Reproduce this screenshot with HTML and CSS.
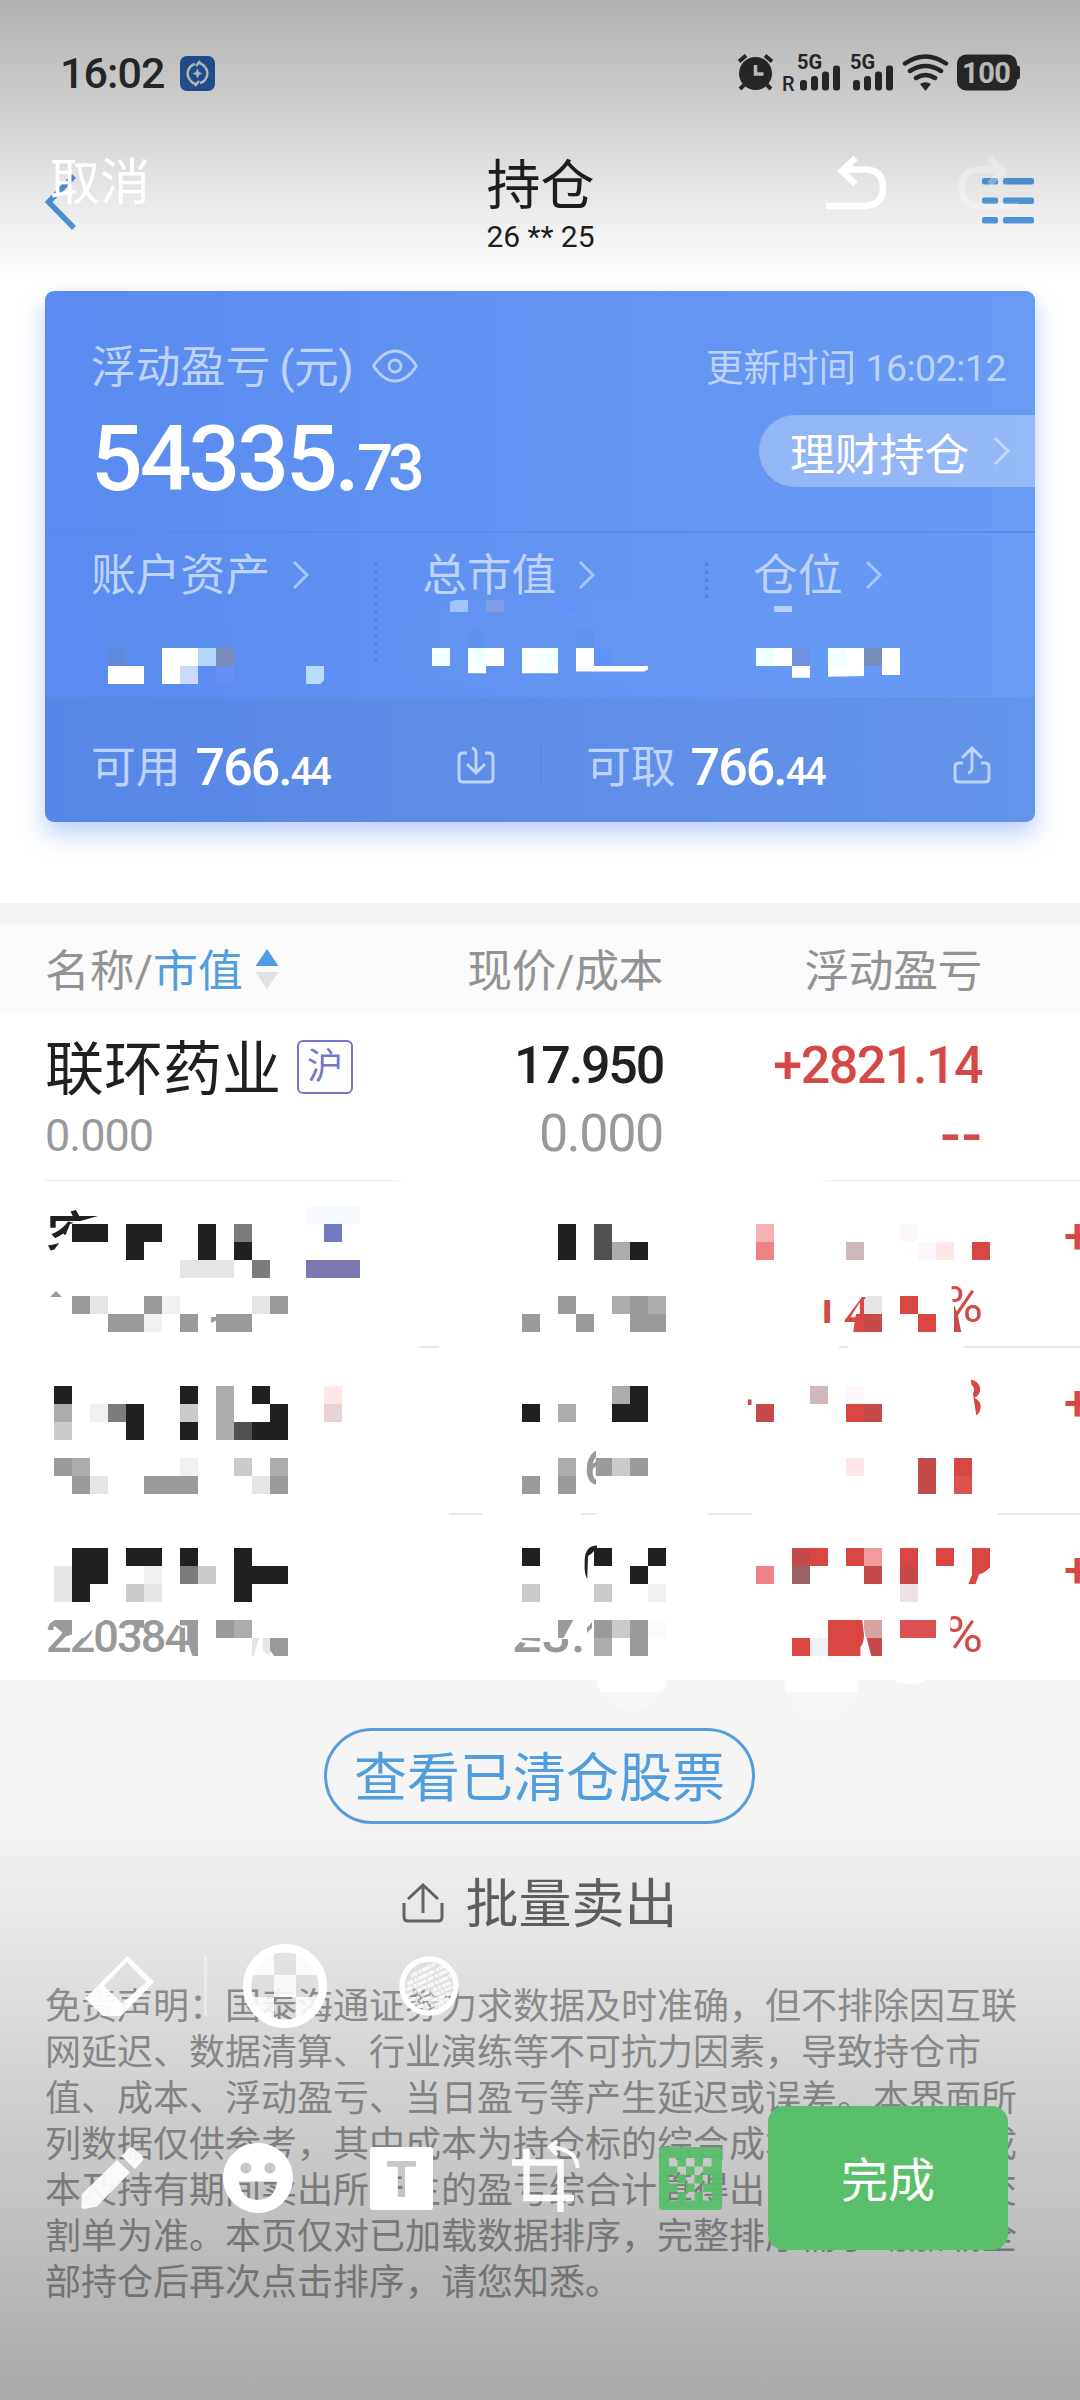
FILE: index.html
```html
<!DOCTYPE html>
<html lang="zh-CN">
<head>
<meta charset="UTF-8">
<meta name="viewport" content="width=device-width, initial-scale=1.0">
<title>持仓</title>
<link rel="stylesheet" href="styles.css">
</head>
<body>
<div class="screen">

<div class="statusbar">
    <span class="clock">16:02</span>
    <svg class="app-icon" width="35" height="35" viewBox="0 0 35 35">
        <rect width="35" height="35" rx="7" fill="#2a63b0"/>
        <path d="M15 8A10 10 0 0 0 10 24M20 27A10 10 0 0 0 25 11" fill="none" stroke="#e6eaf2" stroke-width="2.500"/>
        <path d="M10 24q3 4 7 4M25 11q-3-4-7-4M20 5l-4 5M15 30l4-5" fill="none" stroke="#e6eaf2" stroke-width="2.500"/>
        <path d="M17.500 12.500l1.500 3.500 3.500 1.500-3.500 1.500-1.500 3.500-1.500-3.500-3.500-1.500 3.500-1.500z" fill="#e6eaf2"/>
    </svg>
    <svg class="status-icons" width="284" height="38" viewBox="0 0 284 38">
        <g fill="#303030">
            <circle cx="18.500" cy="19.500" r="16.500"/>
            <path d="M2 7.500l7-6M28 1.500l7 6M7 31l-4 4M30 31l4 4" fill="none" stroke="#303030" stroke-width="4"/>
            <path d="M18.500 11v9h8" fill="none" stroke="#f0f0f0" stroke-width="3.500"/>
            <text x="45" y="36.500" font-size="20" font-weight="500">R</text>
            <text x="60" y="15" font-size="20" font-weight="700">5G</text>
            <rect x="63" y="26" width="7" height="10.500" rx="3"/><rect x="74" y="22" width="7" height="14.500" rx="3"/>
            <rect x="85" y="17.500" width="7" height="19" rx="3"/><rect x="96" y="11.500" width="7" height="25" rx="3"/>
            <text x="113" y="15" font-size="20" font-weight="700">5G</text>
            <rect x="116" y="26" width="7" height="10.500" rx="3"/><rect x="127" y="22" width="7" height="14.500" rx="3"/>
            <rect x="138" y="17.500" width="7" height="19" rx="3"/><rect x="149" y="11.500" width="7" height="25" rx="3"/>
            <path d="M168 9.500q20.500-14 41 0M173 17q15.500-10 31 0M179 24q9.500-6 19 0" fill="none" stroke="#303030" stroke-width="4.500" stroke-linecap="round"/>
            <path d="M183 30q5.500-3.500 11 0l-5.500 7z"/>
            <rect x="220" y="0.500" width="60" height="36" rx="9"/><rect x="277" y="11.500" width="6" height="14" rx="3"/>
            <text x="225" y="28.500" font-size="29" font-weight="700" textLength="49" fill="#f0f0f0">100</text>
        </g>
    </svg>
</div>

<div class="navbar">
    <svg class="back" width="36" height="56" viewBox="0 0 36 56"><path d="M29 2L3.500 28 29 54" fill="none" stroke="#4f9be2" stroke-width="5.500"/></svg>
    <div class="nav-title">
        <h1>持仓</h1>
        <p>26 ** 25</p>
    </div>
    <svg class="menu" width="52" height="46" viewBox="0 0 52 46" fill="#549fe5">
        <rect y="0" width="16" height="6.500" rx="2"/><rect x="21" y="0" width="31" height="6.500" rx="2"/>
        <rect y="19.500" width="16" height="6.500" rx="2"/><rect x="21" y="19.500" width="31" height="6.500" rx="2"/>
        <rect y="39" width="16" height="6.500" rx="2"/><rect x="21" y="39" width="31" height="6.500" rx="2"/>
    </svg>
</div>

<section class="card">
    <div class="card-top">
        <div class="card-line">
            <span class="label">浮动盈亏</span><span class="label unit">(<b>元</b>)</span>
            <svg class="eye" width="46" height="34" viewBox="0 0 46 34" fill="none" stroke="#b5cefb" stroke-width="2.800">
                <path d="M1.500 17C8 7 15 2 23 2s15 5 21.500 15C38 27 31 32 23 32S8 27 1.500 17z"/><circle cx="23" cy="17" r="6"/>
            </svg>
            <span class="updated">更新时间 <i>16:02:12</i></span>
        </div>
        <div class="card-line2">
            <div class="total">54335.<small>73</small></div>
            <div class="pill">理财持仓<svg class="chev" width="18" height="30" viewBox="0 0 18 30"><path d="M2 2l13 13L2 28"/></svg></div>
        </div>
    </div>
    <div class="card-mid">
        <div class="stat">账户资产<svg class="chev" width="18" height="30" viewBox="0 0 18 30"><path d="M2 2l13 13L2 28"/></svg></div>
        <div class="stat">总市值<svg class="chev" width="18" height="30" viewBox="0 0 18 30"><path d="M2 2l13 13L2 28"/></svg></div>
        <div class="stat short">仓位<svg class="chev" width="18" height="30" viewBox="0 0 18 30"><path d="M2 2l13 13L2 28"/></svg></div>
    </div>
    <div class="card-bottom">
        <div class="cash"><span class="label">可用</span><strong>766.<small>44</small></strong>
            <svg class="tray" width="38" height="38" viewBox="0 0 38 38"><path d="M10 7H6Q2 7 2 11v21q0 4 4 4h26q4 0 4-4V11q0-4-4-4h-4M15 2q4 1 4 5v19M10 18l9 9 9-9"/></svg>
        </div>
        <div class="cash"><span class="label">可取</span><strong>766.<small>44</small></strong>
            <svg class="tray" width="38" height="38" viewBox="0 0 38 38"><path d="M10 17H6Q2 17 2 21v11q0 4 4 4h26q4 0 4-4V21q0-4-4-4h-4M15 27q4-1 4-5V3M9 12l10-10 10 10"/></svg>
        </div>
    </div>
    <!-- mosaic brush over the amounts, 18px cells -->
    <svg class="card-mosaic" width="990" height="108" viewBox="45 594 990 108">
        <path d="M403 665q0-61 60-65h257v84H450q-47 0-47-19z" fill="#6898ee" opacity=".25"/>
        <path d="M720 606h210q25 5 25 40t-25 30H720z" fill="#6a9df2" opacity=".25"/>
        <g transform="scale(18)">
            <path d="M6 35h1v1h-1zM9 35h1v1h-1zM12 35h1v1h-1zM26 35h1v1h-1zM32 35h1v1h-1z" fill="#5a8fe6" opacity=".5"/>
            <path d="M25 33.500q0-.17.5-.17h.5v.67h-1z" fill="#9fc5fb"/>
            <path d="M27 33.330h1v.67h-1z" fill="#829de8"/>
            <path d="M31 33.330h1v.67h-1zM33 36h1v1h-1z" fill="#5f93fc"/>
            <path d="M43 33.670h1v.33h-1z" fill="#b3d3fb"/>
            <path d="M6 36h1v1h-1z" fill="#6089de"/>
            <path d="M9 36h2v1h-1v1h-1zM6 37h2v1h-2zM27 36h1v1h-1v.4h-1v-1.400zM29 36h2v1.400h-2zM32 36h1v1h3v.2l-.2.1h-3.800zM43 36h1v1h1v.65h-1v-.65h-1zM46 36h2v1.550l-2 .05zM49 36h1v1.500h-1z" fill="#fff"/>
            <path d="M24 36h1v1h-1zM26 36h1v1h-1zM30 36h1v1h-1zM42 36h1v1h-1zM46 36h1v1h-1z" fill="#f0ffff"/>
            <path d="M11 36h1v1h-1z" fill="#b5d7fb"/>
            <path d="M12 36h1v1h-1zM48 36h1v1h-1z" fill="#788cbc"/>
            <path d="M44 36h1v1h-1z" fill="#6e92e0"/>
            <path d="M10 37h1v1h-1z" fill="#c9dafa"/>
            <path d="M12 37h1v1h-1z" fill="#6490f0"/>
            <path d="M17 37h1v.8l-.2.2h-.8z" fill="#b8dcfc"/>
        </g>
    </svg>
</section>

<div class="band"></div>

<div class="list-head">
    <span>名称/<em>市值</em><svg class="sort" width="24" height="40" viewBox="0 0 24 40"><path d="M12 0l11.500 17H.5z" fill="#519de4"/><path d="M12 40L.5 23h23z" fill="#dfe3e6"/></svg></span>
    <span>现价/成本</span>
    <span>浮动盈亏</span>
</div>

<div class="stock">
    <div class="name">联环药业<span class="tag">沪</span></div>
    <div class="price">17.950</div>
    <div class="price gain up">+2821.14</div>
    <div class="value">0.000</div>
    <div class="cost">0.000</div>
    <div class="rate up">--</div>
</div>

<!-- three rows wiped with the mosaic brush -->
<div class="masked">
<svg width="1080" height="550" viewBox="0 1180 1080 550">
    <defs>
        <clipPath id="cName"><path d="M46 1204h34l18 12-28 8-4 10-18 24h-2z"/></clipPath>
        <clipPath id="c14"><path d="M820 1300h14v24h-14zM842 1324l20-27h6v12l-12 36h-14z"/></clipPath>
        <clipPath id="cPct"><path d="M951 1280h40v50h-33l-4-10z"/></clipPath>
        <clipPath id="c3"><path d="M970 1375h20v45h-13z"/></clipPath>
        <clipPath id="c6"><path d="M580 1455l16-10v42h-16z"/></clipPath>
        <clipPath id="c0"><path d="M580 1540h17v10l-9 6-1 30h-7z"/></clipPath>
        <clipPath id="cCode"><path d="M46 1622l10-3 16 18 12 1 14-14 10-6 60 2 15 8 7-3v30H46z"/></clipPath>
        <clipPath id="c23"><path d="M512 1640l16 4 12-2 3-3h40v20h-71z"/></clipPath>
        <clipPath id="cPct2"><path d="M951 1612h40v45h-42z"/></clipPath>
    </defs>
    <path d="M45 1180h345l15-1M820 1179l10 1h250M419 1347h20M839 1347h9M964 1347h116M449 1514h33M581 1514h16M708 1514h44M998 1514h82" fill="none" stroke="#e8e8e8" stroke-width="2"/>
    <text x="46" y="1260" font-size="58" font-weight="500" fill="#202020" clip-path="url(#cName)">客</text>
    <path d="M50 1297l6-6 6 6zM211 1323v-6h12z" fill="#999"/>
    <g class="num up">
        <text x="812" y="1323" font-size="48" clip-path="url(#c14)">1</text>
        <text x="843" y="1330" font-size="50" clip-path="url(#c14)">4</text>
        <text x="944" y="1322" font-size="50" font-weight="400" textLength="39" lengthAdjust="spacingAndGlyphs" clip-path="url(#cPct)">%</text>
        <text x="954" y="1417" font-size="52" clip-path="url(#c3)">3</text>
        <text x="944" y="1652" font-size="50" font-weight="400" textLength="39" lengthAdjust="spacingAndGlyphs" clip-path="url(#cPct2)">%</text>
        <text x="1064" y="1253" font-size="48">+</text>
        <text x="1064" y="1420" font-size="48">+</text>
        <text x="1064" y="1587" font-size="48">+</text>
    </g>
    <text class="num" x="582" y="1583" font-size="52" fill="#202020" clip-path="url(#c0)">0</text>
    <text class="num" x="584" y="1485" font-size="50" fill="#999" clip-path="url(#c6)">6</text>
    <text class="num" x="46" y="1652" font-size="45" textLength="144" fill="#999" clip-path="url(#cCode)">220384</text>
    <text class="num" x="512" y="1652" font-size="52" fill="#999" clip-path="url(#c23)">23.</text>
    <path d="M587 1628l5-6v6l-5 5z" fill="#999"/>
    <g transform="scale(18)">
        <path fill="#202020" d="M4 68h2v1h-2zM7 68h2v1h-1v1h-1zM11 68h1v2h-1zM13 69h1v1h-1zM3 77h1v1h-1zM10 77h1v1h-1zM14 77h1v1h-1zM7 78h1v2h-1zM15 78h1v2h-2v-1h1zM10 79h1v1h-1zM29 78h1v1h-1zM31 68h1v2h-1zM35 69h1v1h-1zM35 77h1v2h-2v-1h1zM4 86h2v2h-1v1h-1zM7 86h2v1h-2zM10 86h1v1h-1zM13 86h1v1h2v1h-2v1h-1zM29 86h1v1h-1zM33 86h1v1h-1zM36 86h1v1h-1zM35 87h1v1h-1z"/>
        <path fill="#505050" d="M33 68h1v2h-1zM13 79h1v1h-1z"/>
        <path fill="#7d7c7d" d="M13 68h1v1h-1zM14 70h1v1h-1zM6 78h1v1h-1zM10 87h1v1h-1z"/>
        <path fill="#9b999c" d="M4 72h1v1h-1zM8 72h1v1h-1zM15 72h1v1h-1zM6 73h2v1h-2zM10 73h1v1h-1zM12 73h2v1h-2zM29 73h1v1h-1zM31 72h1v1h-1zM32 73h1v1h-1zM35 72h1v1h1v1h-2zM3 81h1v1h-1zM4 82h1v1h-1zM8 82h3v1h-3zM15 82h1v1h-1zM29 82h1v1h-1zM31 82h1v1h-1zM33.100 81h.9v1h-.9zM35 81h1v1h-1zM3 90h1v.8l-.3.1-.7-.6zM7 90h1v.45l-.3-.05-.3-.2-.4.1zM10 90h1v2h-.3l-.3-.8v-.9h-.4zM12 90h1v1h-1zM15 91h1v1h-.75l-.25-.3zM29 91h1v.2l-1-.1zM31 90h.85l-.55 1h-.3zM33 90h1v1h-1zM35 90h1v2h-1z"/>
        <path fill="#acabad" d="M12 77h1v3h-1zM3 78h1v1h-1zM4 81h1v1h-1zM15 81h1v1h-1zM31 78h1v1h-1zM34 69h1v1h-1zM34 72h1v1h-1zM36 72h1v1h-1zM34 77h1v1h-1zM31 81h1v1h-1zM13 90h1v1h-1zM33 91h1v1h-1z"/>
        <path fill="#cbcacc" d="M3 79h1v1h-1zM10 78h1v1h-1zM13 81h1v1h-1zM11 87h1v1h-1zM7 88h1v1h-1zM33 88h1v1h-1zM34 81h1v1h-1zM34 90h1v1h-1zM29 88h1v1h-1z"/>
        <path fill="#e6e5e6" d="M10 70h3v1h-3zM5 72h1v1h-1zM14 72h1v1h-1zM14 82h1v1h-1zM3 87h1v2h-1zM8 88h1v1h-1zM14 91h.4l-.3 1h-.1zM14.600 91h.4v1l-.4-.3zM48 72.200l.2-.2h.8v1h-1zM5 82h1v1h-1z"/>
        <path fill="#f1f1f2" d="M9 72h1v1h-1zM8 73h1v1h-1zM5 78h1v1h-1zM10 81h1v1h-1zM8 87h1v1h-1zM36 88h1v1h-1zM45 91h1v1h-1z"/>
        <path fill="#f7fbff" d="M17 67h3v1h-3z"/>
        <path fill="#7478c0" d="M18 68h1v1h-1z"/>
        <path fill="#7b79b0" d="M17 70h3v1h-3z"/>
        <path fill="#fde7e6" d="M18 77h1v1h-1zM52 69h1v1h-1zM47 81h1v1h-1z"/>
        <path fill="#e8d4d6" d="M18 78h1v1h-1z"/>
        <path fill="#fdf6fa" d="M50 68h1v1h-1zM51 69h1v1h-1zM47 77h1v1h-1z"/>
        <path fill="#fdf9ff" d="M36 90h1v1h-1z"/>
        <path fill="#ece1e6" d="M50 88h1v1h-1z"/>
        <path fill="#f4b0b4" d="M42 68h1v1h-1z"/>
        <path fill="#ee8285" d="M42 69h1v1h-1zM42 87h1v1h-1z"/>
        <path fill="#f09c9e" d="M48 86h1v1h-1z"/>
        <path fill="#cfb8ba" d="M47 69h1v1h-1zM45 77h1v1h-1z"/>
        <path fill="#d4a4a3" d="M48 90h1v1h-.9l-.1-.5z"/>
        <path fill="#9a6265" d="M44 87h1v1h-1z"/>
        <path fill="#da4641" d="M54 69h1v1h-1zM50 72h1v1h-1zM51 73h1v1h-1zM47.550 73h.45v1h-.6zM47 78h1v1h-1zM53 81h1v1h-1zM45 86h1v1h-1zM47 86h1v1h-1zM50 86h1v1h-1zM52 86h1v1h-1zM54 86h1v1.100q-.4.35-.6.35l-.2.550h-.4l.2-.5v-.5zM46 90h1.900l.1.800q0 .5-.2.700v.5h-1.800zM44 91h1v1h-1z"/>
        <path fill="#c64a4a" d="M48 73h1v1h-1zM53 72.500l.2.500.2 1h-.4zM42 78h1v1h-1zM48 78h1v1h-1zM41.550 77.750h.2v.3h-.2zM51 81h1v2h-1zM44 86h1v1h-1zM48 87h1v1h-1zM50 87h1v1h-1zM48.150 91h.85v1h-.6z"/>
        <path fill="#dc5252" d="M53 82h1v1h-1zM50 90h2v1h-2z"/>
    </g>
    <path d="M596 1680h71q-1 8-5 12-10 18-30 18t-31-18q-4-4-5-12zM784 1680h75q0 20-14 33-25 15-46 0-14-13-15-33z" fill="#f7f7f7"/>
    <path d="M596 1679h71q-1 9-5 13h-61q-4-4-5-13zM784 1679h75l-2 13h-71zM890 1679h38q-17 10-38 0z" fill="#fff"/>
</svg>
</div>

<div class="footer">
    <div class="cleared">查看已清仓股票</div>
    <div class="batch"><svg width="42" height="40" viewBox="0 0 42 40" fill="none" stroke="#686868" stroke-width="3"><path d="M2 20v14q0 4 4 4h30q4 0 4-4V20M21 30V3M6 16L21 2l15 14"/></svg><span>批量卖出</span></div>
    <p class="notice">免责声明：国泰海通证券力求数据及时准确，但不排除因互联<br>
网延迟、数据清算、行业演练等不可抗力因素，导致持仓市<br>
值、成本、浮动盈亏、当日盈亏等产生延迟或误差。本界面所<br>
列数据仅供参考，其中成本为持仓标的综合成本，含买入总成<br>
本及持有期间卖出所产生的盈亏综合计算得出，具体请您以交<br>
割单为准。本页仅对已加载数据排序，完整排序需手动加载全<br>
部持仓后再次点击排序，请您知悉。</p>
</div>

<!-- picture editor controls on top of the page -->
<div class="editor">
    <div class="editor-top">
        <span class="cancel">取消</span>
        <svg width="60" height="56" viewBox="0 0 60 56" fill="none" stroke="#fff" stroke-width="6.500"><path d="M0 50h39q18-1 18-18.500T39 13.500H15M29.500 2L16 15l13.500 13"/></svg>
        <svg class="redo" width="62" height="56" viewBox="0 0 62 56" fill="none" stroke="#fff" stroke-width="6.500"><g opacity=".3"><path d="M60 50H21Q3.500 49 3.500 31.500T21 13.500h24M31.500 2L45 15 31.500 28"/></g></svg>
    </div>

    <div class="brushes">
        <svg width="69" height="60" viewBox="0 0 69 60"><path d="M42.500 0L69 26 36 60H18L0 42.500zM42 6L19 30l18 17.500L61.500 26z" fill="#fff" fill-rule="evenodd" opacity=".95"/></svg>
        <i class="sep"></i>
        <svg class="brush-mosaic" width="84" height="84" viewBox="0 0 84 84">
            <defs><clipPath id="disc"><circle cx="42" cy="42" r="34"/></clipPath></defs>
            <path d="M5 5h26v26H5zM53 5h26v26H53zM31 31h22v22H31zM5 53h26v26H5zM53 53h26v26H53z" fill="#fff" opacity=".85" clip-path="url(#disc)"/>
            <circle cx="42" cy="42" r="37.800" fill="none" stroke="#fff" stroke-width="8.500"/>
        </svg>
        <svg class="brush-rough" width="60" height="60" viewBox="0 0 60 60">
            <path d="M12 20l24-12M8 28L46 10M7 34l43-20M7 40l45-20M10 45l43-19M13 49l40-18M18 52l34-15M24 54l26-12M32 55l14-7" stroke="#fff" stroke-width="3.500" stroke-dasharray="7 1.500 3 1 10 1" opacity=".75"/>
            <circle cx="30" cy="30" r="27" fill="none" stroke="#fff" stroke-width="5.500"/>
        </svg>
    </div>

    <div class="tools">
        <svg width="64" height="63" viewBox="0 0 64 63" fill="#fff" opacity=".93"><path d="M50 0q2 0 12 10 1 2 0 3l-8 9-13.500-13L48 1zM36 13l13 12.500L16 59.500 3 62q-3 0-2.500-4L1 47z"/></svg>
        <svg width="70" height="70" viewBox="0 0 70 70"><path d="M35 0a35 35 0 1 0 .01 0zM23 19.500a5.500 5.500 0 1 1-.01 0zM47 19.500a5.500 5.500 0 1 1-.01 0zM16 38.500h38q-2 18-19 18.500-17-.5-19-18.500z" fill="#fff" fill-rule="evenodd"/></svg>
        <svg width="63" height="63" viewBox="0 0 63 63">
            <mask id="letter"><rect width="63" height="63" fill="#fff"/><text x="31.500" y="50" font-size="50" font-weight="700" text-anchor="middle" fill="#000">T</text></mask>
            <rect width="63" height="63" rx="3" fill="#fff" mask="url(#letter)"/>
        </svg>
        <svg class="crop" width="70" height="72" viewBox="0 0 70 72" fill="none" stroke="#fff" stroke-width="6.500" opacity=".93"><path d="M0 22.500h48.500V72M14.500 9v49H62"/><path d="M65.500 28Q65 9 38 7M45 1l-7 6 7 8" stroke-width="4"/></svg>
        <svg width="63" height="63" viewBox="0 0 63 63">
            <path d="M3 0h57q3 0 3 3v57q0 3-3 3H3q-3 0-3-3V3Q0 0 3 0zM10 11h8.500v8.500H10zM27 11h8.500v8.500H27zM44 11h8.500v8.500H44zM18.500 19.500H27V28h-8.500zM35.500 19.500H44V28h-8.500zM10 28h8.500v8.500H10zM27 28h8.500v8.500H27zM44 28h8.500v8.500H44zM18.500 36.500H27V45h-8.500zM35.500 36.500H44V45h-8.500zM10 45h8.500v8.500H10zM27 45h8.500v8.500H27zM44 45h8.500v8.500H44z" fill="#58bf6d" fill-rule="evenodd" opacity=".95"/>
        </svg>
        <div class="done">完成</div>
    </div>
</div>

</div>
</body>
</html>
```
FILE: styles.css
```css
* { box-sizing: border-box; margin: 0; padding: 0; }
body { background: #fff; font-family: Roboto, "Noto Sans CJK SC", sans-serif; color: #202020; }
svg { display: block; flex: none; }
i, em { font-style: normal; }
.screen { position: relative; width: 1080px; height: 2400px; overflow: hidden; }

/* status bar */
.statusbar { display: flex; align-items: center; height: 146px; padding: 0 59px 0 60px; color: #303030; }
.clock { width: 120px; font-size: 43px; line-height: 50px; font-weight: 500; letter-spacing: -0.9px; }
.status-icons { margin-left: auto; }

/* nav bar */
.navbar { display: flex; justify-content: space-between; height: 145px; padding: 0 45px; }
.back { width: 52px; margin-top: 28px; }
.back path { transform: translateX(-8px); }
.menu { margin: 32px 1px 0 0; }
.nav-title { padding: 10px 0 0 2px; text-align: center; }
.nav-title h1 { font-size: 54px; line-height: 62px; font-weight: 400; }
.nav-title p { margin-top: 1px; font-size: 30px; line-height: 36px; }

/* blue card */
.card { position: relative; height: 531px; margin: 0 45px; border-radius: 9px; color: #fff; background: linear-gradient(90deg, #598bf0, #6395f2 60%, #679bf4); box-shadow: 0 12px 24px rgba(90, 139, 240, .42); }
.label, .stat { font-size: 44.8px; line-height: 60px; color: #bcd3fc; }
.card-top { height: 240px; padding: 47px 0 0 46px; }
.card-line, .card-line2 { display: flex; }
.card-line { align-items: center; height: 60px; }
.unit { margin-left: 9px; letter-spacing: -0.5px; }
.unit b { font-weight: 400; }
.eye { margin: -5px 0 0 19px; }
.updated { margin: -7px 29px 0 auto; font-size: 37.500px; color: #bcd3fc; }
.updated i { letter-spacing: -0.5px; }
.total { margin-top: 16px; font-size: 91px; line-height: 91px; font-weight: 500; letter-spacing: -3px; }
.total small { font-size: 64px; letter-spacing: -5px; }
.pill { display: flex; align-items: center; width: 276px; height: 72px; margin: 17px 0 0 auto; padding-left: 31px; border-radius: 36px 0 0 36px; background: rgba(255, 255, 255, .3); font-size: 44.800px; }
.chev { margin-left: 22px; fill: none; stroke: #a9c6fb; stroke-width: 3; }
.pill .chev { margin-left: 24px; stroke: #c3d8fc; }
.card-mid { display: grid; grid-template-columns: 329px 331px 330px; height: 166px; border-top: 2px solid #5a8ae8; }
.stat { display: flex; align-items: center; height: 86px; padding-left: 46px; }
.stat + .stat { height: 164px; align-items: flex-start; padding: 13px 0 0 48px; background: repeating-linear-gradient(#4f7fdc 0 3px, transparent 3px 8px) 0 30px / 3px 104px no-repeat; }
.stat .chev { margin-top: -2px; }
.stat + .stat .chev { margin-top: 14px; }
.stat + .stat.short { background-size: 3px 35px; }
.card-bottom { display: grid; grid-template-columns: 1fr 1fr; height: 125px; padding-top: 41px; border-radius: 0 0 9px 9px; background: rgba(80, 120, 190, .2); }
.cash { display: flex; height: 56px; padding: 0 45px 0 46px; }
.cash + .cash { border-left: 1px solid rgba(70, 110, 200, .35); height: 42px; margin-top: 5px; padding: 0 44px 0 45px; }
.cash + .cash > * { margin-top: -5px; }
.cash strong { margin-left: 15px; font-size: 52px; line-height: 60px; font-weight: 500; letter-spacing: -2px; }
.cash small { font-size: 38px; letter-spacing: -2.300px; }
.cash .tray, .cash + .cash .tray { margin: 8px 0 0 auto; fill: none; stroke: #bcd3fc; stroke-width: 3; }
.cash + .cash .tray { margin-top: 3px; }
.card-mosaic { position: absolute; left: 0; top: 303px; }

/* holdings */
.band { height: 21px; margin-top: 81px; background: #f5f5f5; }
.list-head, .stock { display: grid; grid-template-columns: 333px 285px 319px; padding-left: 45px; }
.list-head { height: 90px; line-height: 96px; background: #fbfbfb; color: #939393; font-size: 44.800px; letter-spacing: -0.4px; }
.list-head span { text-align: right; }
.list-head span:first-child { display: flex; align-items: flex-start; letter-spacing: 0; }
.list-head em { color: #519dde; }
.sort { margin: 25px 0 0 12px; }
.stock { height: 166px; grid-template-rows: 91px 60px; padding-top: 10px; text-align: right; }
.name { display: flex; align-items: center; font-size: 59px; line-height: 91px; }
.tag { width: 56px; height: 54px; margin: -5px 0 0 16px; border: 2px solid #7478c8; border-radius: 6px; font-size: 36px; line-height: 50px; text-align: center; color: #7478c8; }
.price { font-size: 52px; line-height: 84px; font-weight: 500; letter-spacing: -2.200px; }
.gain { letter-spacing: -1.500px; }
.value { text-align: left; font-size: 45px; line-height: 42px; letter-spacing: -1px; color: #999; }
.cost { font-size: 52px; line-height: 37px; letter-spacing: -1.300px; color: #999; }
.rate { font-size: 60px; line-height: 39px; font-weight: 500; letter-spacing: 1px; margin-right: -1px; }
.up { color: #d54846; fill: #d54846; }
.masked { height: 500px; }
.masked svg { position: relative; }
.num { font-weight: 500; }

/* footer */
.footer { height: 720px; padding: 48px 46px 0 45px; background: #f5f5f5; }
.cleared { width: 431px; height: 96px; margin: 0 auto; border: 3px solid #579ddd; border-radius: 48px; text-align: center; font-size: 53px; line-height: 96px; color: #519dde; }
.batch { display: flex; align-items: center; justify-content: center; gap: 22px; height: 60px; margin-top: 49px; font-size: 53px; line-height: 60px; color: #626262; }
.batch span { padding-top: 4px; }
.notice { margin-top: 51px; font-size: 36px; line-height: 46px; color: #999; white-space: nowrap; }

/* editor overlay */
.editor { position: absolute; inset: 0; color: #fff; background: linear-gradient(rgba(0, 0, 0, .31), transparent 280px, transparent 1810px, rgba(0, 0, 0, .31)); }
.editor-top { display: flex; height: 1944px; padding: 156px 0 0 50px; }
.cancel { width: 776px; font-size: 50px; line-height: 54px; }
.redo { margin-left: 72px; }
.brushes { display: flex; align-items: center; height: 84px; padding-left: 85px; }
.sep { width: 3px; height: 60px; margin-left: 50px; background: rgba(255, 255, 255, .35); }
.brush-mosaic { margin-left: 36px; }
.brush-rough { margin-left: 72px; }
.tools { display: flex; align-items: center; height: 144px; margin-top: 78px; padding-left: 81px; }
.tools svg + svg { margin-left: 78px; }
.tools svg:nth-child(3) { margin-left: 77px; }
.tools .crop { margin-bottom: 4px; margin-left: 79px; }
.tools svg:nth-child(5) { margin-left: 77px; }
.done { width: 240px; height: 144px; margin-left: 46px; border-radius: 16px; background: #5abf6b; font-size: 47px; line-height: 150px; text-align: center; }
```
